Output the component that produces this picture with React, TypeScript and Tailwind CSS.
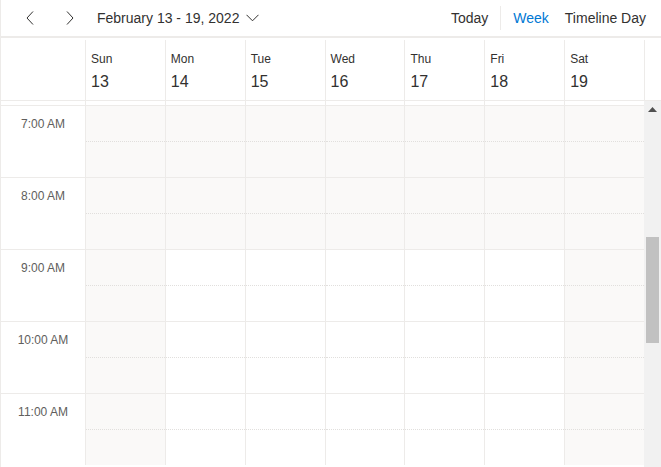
import React from "react";

const days = [
  { n: "Sun", d: 13 },
  { n: "Mon", d: 14 },
  { n: "Tue", d: 15 },
  { n: "Wed", d: 16 },
  { n: "Thu", d: 17 },
  { n: "Fri", d: 18 },
  { n: "Sat", d: 19 },
];

const hours = [
  { label: "7:00 AM", h: 7 },
  { label: "8:00 AM", h: 8 },
  { label: "9:00 AM", h: 9 },
  { label: "10:00 AM", h: 10 },
  { label: "11:00 AM", h: 11 },
];

function Chevron({ dir }: { dir: "left" | "right" | "down" }) {
  if (dir === "down") {
    return (
      <svg width="13" height="8" viewBox="0 0 13 8" fill="none">
        <path d="M0.5 0.8 L6.5 6.8 L12.5 0.8" stroke="#323130" strokeWidth="1" />
      </svg>
    );
  }
  return (
    <svg width="8" height="14" viewBox="0 0 8 14" fill="none">
      {dir === "left" ? (
        <path d="M7 0.5 L1 7 L7 13.5" stroke="#323130" strokeWidth="1" />
      ) : (
        <path d="M1 0.5 L7 7 L1 13.5" stroke="#323130" strokeWidth="1" />
      )}
    </svg>
  );
}

export default function App() {
  return (
    <div
      className="w-[661px] h-[467px] overflow-hidden bg-white border-l border-[#edebe9] flex flex-col text-[#323130]"
      style={{ fontFamily: '"Liberation Sans", Arial, sans-serif' }}
    >
      {/* Toolbar */}
      <div className="h-[38px] shrink-0 flex items-center border-b-2 border-[#edebe9]">
        <div className="w-[33px] flex justify-end">
          <Chevron dir="left" />
        </div>
        <div className="w-[40px] flex justify-end">
          <Chevron dir="right" />
        </div>
        <div className="ml-[23px] text-[14px] flex items-center">
          February 13 - 19, 2022
          <span className="ml-[7px] mt-[-1px] flex">
            <Chevron dir="down" />
          </span>
        </div>
        <div className="flex-1" />
        <div className="text-[14px] flex items-center">
          <span>Today</span>
          <span className="ml-[12px] mr-[12px] w-px h-[24px] bg-[#edebe9]" />
          <span className="text-[#0078d4]">Week</span>
          <span className="ml-[16px] mr-[15px]">Timeline Day</span>
        </div>
      </div>

      {/* Header */}
      <div className="h-[63px] shrink-0 flex border-b border-[#edebe9]">
        <div className="w-[84px] shrink-0" />
        {days.map((d) => (
          <div
            key={d.n}
            className="flex-1 border-l border-[#edebe9] pl-[5px] pt-[11px] mt-[2px]"
          >
            <div className="text-[12px] leading-[16px] text-[#323130]">{d.n}</div>
            <div className="text-[16px] leading-[20px] mt-[5px]">{d.d}</div>
          </div>
        ))}
        <div className="w-[17px] shrink-0 border-l border-[#edebe9] mt-[2px]" />
      </div>

      {/* Body */}
      <div className="flex-1 flex min-h-0">
        <div className="flex-1 flex flex-col">
          <div className="h-[4px] shrink-0 flex">
            <div className="w-[84px] shrink-0" />
            {days.map((d) => (
              <div key={d.n} className="flex-1 border-l border-[#edebe9]" />
            ))}
          </div>
          {hours.map((hr) => (
            <div key={hr.label} className="h-[72px] shrink-0 flex border-t border-[#edebe9]">
              <div className="w-[84px] shrink-0 text-center text-[12px] leading-[16px] text-[#605e5c] pt-[10px]">
                {hr.label}
              </div>
              {days.map((d, i) => {
                const shaded = i === 0 || i === 6 || hr.h < 9;
                return (
                  <div
                    key={d.n}
                    className={
                      "flex-1 border-l border-[#edebe9] flex flex-col " +
                      (shaded ? "bg-[#faf9f8]" : "bg-white")
                    }
                  >
                    <div className="h-[35px]" />
                    <div className="border-t border-dotted border-[#e1dfdd]" />
                  </div>
                );
              })}
            </div>
          ))}
        </div>
        {/* Scrollbar */}
        <div className="w-[17px] shrink-0 bg-[#f1f1f1] flex flex-col items-center">
          <svg width="9" height="5" viewBox="0 0 9 5" className="mt-[6px]">
            <path d="M0 5 L4.5 0 L9 5 Z" fill="#505050" />
          </svg>
          <div className="mt-[125px] w-[13px] h-[106px] bg-[#c1c1c1]" />
        </div>
      </div>
    </div>
  );
}
